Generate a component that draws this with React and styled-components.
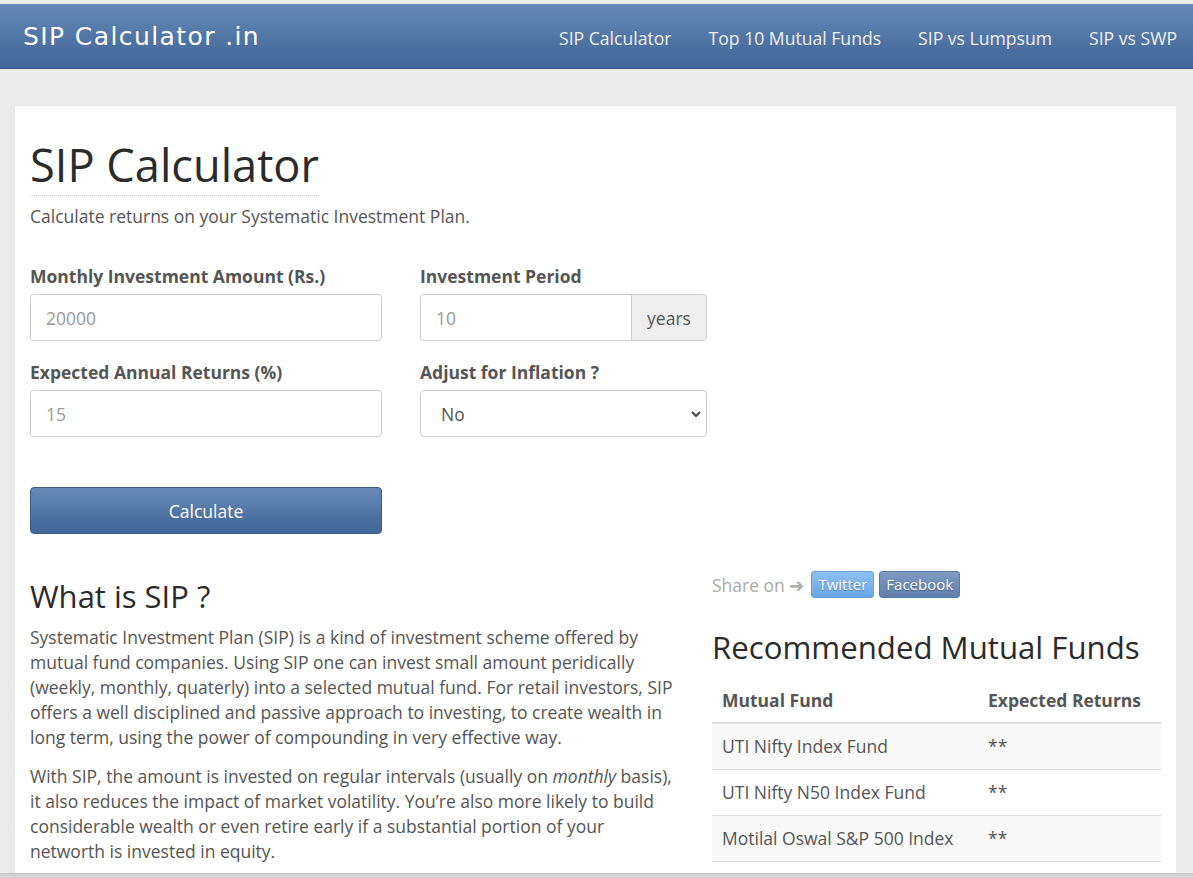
import React from "react";
import styled, { createGlobalStyle } from "styled-components";

const GlobalStyle = createGlobalStyle`
  html, body {
    margin: 0;
    padding: 0;
    background: #ebebeb;
    font-family: "Open Sans", "Noto Sans", sans-serif;
    color: #555;
  }
  * { box-sizing: border-box; }
`;

const Header = styled.header`
  border-top: 4px solid #ececec;
  height: 69px;
  background: linear-gradient(to bottom, #6688b6 0%, #5a7eae 30%, #4a6e9e 70%, #44689a 100%);
  border-bottom: 1px solid #35557f;
  display: flex;
  align-items: center;
  justify-content: space-between;
  padding: 3px 16px 0 23px;
`;

const Logo = styled.div`
  font-family: "DejaVu Sans", "Noto Sans", sans-serif;
  font-size: 25px;
  letter-spacing: 1.4px;
  color: #fff;
  margin-top: -2px;
`;

const Nav = styled.nav`
  display: flex;
  gap: 37px;
`;

const NavLink = styled.a`
  color: #f0f0f0;
  font-size: 17.6px;
  text-decoration: none;
`;

const Page = styled.div`
  padding: 37px 17px 40px 15px;
`;

const Card = styled.main`
  background: #fff;
  padding: 30px 15px 20px;
`;

const Title = styled.h1`
  display: inline-block;
  margin: 0;
  font-size: 45.2px;
  font-weight: 400;
  color: #2b2b2b;
  line-height: 58px;
  padding-bottom: 1px;
  border-bottom: 1px dotted #d6d6d6;
`;

const Lead = styled.p`
  margin: 8px 0 0;
  font-size: 17.5px;
  color: #555;
`;

const FormGrid = styled.div`
  display: grid;
  grid-template-columns: 352px 287px;
  column-gap: 38px;
  row-gap: 19px;
  margin-top: 36px;
`;

const Field = styled.div`
  display: flex;
  flex-direction: column;
`;

const Label = styled.label`
  font-size: 17.5px;
  font-weight: 700;
  color: #555;
  margin-bottom: 6px;
  line-height: 24px;
`;

const Input = styled.input`
  height: 47px;
  width: 100%;
  border: 1px solid #ccc;
  border-radius: 4px;
  padding: 0 15px;
  font-family: inherit;
  font-size: 17.5px;
  color: #555;
  &::placeholder { color: #999; }
`;

const InputGroup = styled.div`
  display: flex;
  height: 47px;
  border: 1px solid #ccc;
  border-radius: 4px;
  overflow: hidden;
`;

const GroupInput = styled.input`
  flex: 1;
  min-width: 0;
  border: none;
  padding: 0 15px;
  font-family: inherit;
  font-size: 17.5px;
  &::placeholder { color: #999; }
`;

const Addon = styled.span`
  width: 75px;
  background: #eee;
  border-left: 1px solid #ccc;
  display: flex;
  align-items: center;
  justify-content: center;
  font-size: 17.5px;
  color: #555;
`;

const SelectBox = styled.div`
  position: relative;
  height: 47px;
  border: 1px solid #ccc;
  border-radius: 4px;
  display: flex;
  align-items: center;
  padding: 0 20px;
  font-size: 17.5px;
  color: #555;
`;

const Chevron = styled.svg`
  position: absolute;
  right: 4px;
  top: 50%;
  margin-top: -5px;
`;

const Button = styled.button`
  margin-top: 50px;
  width: 352px;
  height: 47px;
  border: 1px solid #3a5b86;
  border-radius: 4px;
  background: linear-gradient(to bottom, #6688b6 0%, #5a7eae 35%, #4a6e9e 70%, #44689a 100%);
  color: #fff;
  font-family: inherit;
  font-size: 17.5px;
`;

const Lower = styled.div`
  display: grid;
  grid-template-columns: 652px 449px;
  column-gap: 30px;
  margin-top: 36px;
`;

const SectionTitle = styled.h2`
  margin: 5px 0 8px;
  font-size: 31px;
  font-weight: 400;
  color: #2b2b2b;
  line-height: 42px;
`;

const Para = styled.p`
  margin: 0 0 14px;
  font-size: 17.5px;
  line-height: 25px;
  color: #555;
`;

const Share = styled.div`
  display: flex;
  align-items: center;
  gap: 5px;
  font-size: 17.5px;
  color: #aaa;
  margin-top: 1px;
`;

const ShareLabel = styled.span`
  margin-right: 2px;
`;

const ShareBtn = styled.span`
  font-size: 15px;
  color: #fff;
  padding: 2px 6px 3px;
  border-radius: 3px;
  border: 1px solid ${p => p.$border};
  background: ${p => p.$bg};
  text-shadow: 0 1px 1px rgba(0,0,0,0.25);
`;

const RightTitle = styled.h2`
  margin: 29px 0 0;
  font-size: 31.2px;
  font-weight: 400;
  color: #2b2b2b;
  line-height: 40px;
`;

const Table = styled.table`
  margin-top: 13px;
  width: 100%;
  border-collapse: collapse;
  font-size: 17.5px;
`;

const Th = styled.th`
  text-align: left;
  font-weight: 700;
  color: #555;
  padding: 8px 10px 10px;
  border-bottom: 2px solid #ddd;
`;

const Row = styled.tr`
  background: ${p => (p.$striped ? "#f9f9f9" : "#fff")};
`;

const Td = styled.td`
  padding: 0 10px;
  height: 46px;
  color: #555;
  border-bottom: 1px solid #ddd;
`;

const BottomBar = styled.div`
  position: fixed;
  left: 0;
  right: 0;
  bottom: 0;
  height: 5px;
  background: #d4d4d4;
  border-top: 1px solid #c4c4c4;
`;

const navItems = ["SIP Calculator", "Top 10 Mutual Funds", "SIP vs Lumpsum", "SIP vs SWP"];

const funds = [
  "UTI Nifty Index Fund",
  "UTI Nifty N50 Index Fund",
  "Motilal Oswal S&P 500 Index",
];

export default function App() {
  return (
    <>
      <GlobalStyle />
      <Header>
        <Logo>SIP Calculator .in</Logo>
        <Nav>
          {navItems.map(n => (
            <NavLink key={n} href="#">{n}</NavLink>
          ))}
        </Nav>
      </Header>
      <Page>
        <Card>
          <Title>SIP Calculator</Title>
          <Lead>Calculate returns on your Systematic Investment Plan.</Lead>

          <FormGrid>
            <Field>
              <Label>Monthly Investment Amount (Rs.)</Label>
              <Input placeholder="20000" />
            </Field>
            <Field>
              <Label>Investment Period</Label>
              <InputGroup>
                <GroupInput placeholder="10" />
                <Addon>years</Addon>
              </InputGroup>
            </Field>
            <Field>
              <Label>Expected Annual Returns (%)</Label>
              <Input placeholder="15" />
            </Field>
            <Field>
              <Label>Adjust for Inflation ?</Label>
              <SelectBox>
                No
                <Chevron width="12" height="10" viewBox="0 0 12 10">
                  <path d="M2 3 L6 7 L10 3" fill="none" stroke="#444" strokeWidth="2" />
                </Chevron>
              </SelectBox>
            </Field>
          </FormGrid>

          <Button>Calculate</Button>

          <Lower>
            <div>
              <SectionTitle>What is SIP ?</SectionTitle>
              <Para>
                Systematic Investment Plan (SIP) is a kind of investment scheme offered by
                mutual fund companies. Using SIP one can invest small amount peridically
                (weekly, monthly, quaterly) into a selected mutual fund. For retail investors, SIP
                offers a well disciplined and passive approach to investing, to create wealth in
                long term, using the power of compounding in very effective way.
              </Para>
              <Para>
                With SIP, the amount is invested on regular intervals (usually on <em>monthly</em> basis),
                it also reduces the impact of market volatility. You’re also more likely to build
                considerable wealth or even retire early if a substantial portion of your
                networth is invested in equity.
              </Para>
            </div>
            <div>
              <Share>
                <ShareLabel>Share on ➔</ShareLabel>
                <ShareBtn $bg="linear-gradient(#8cc0f0, #6aa6e4)" $border="#6aa0d8">Twitter</ShareBtn>
                <ShareBtn $bg="linear-gradient(#7d9bc2, #5f80ad)" $border="#587aa6">Facebook</ShareBtn>
              </Share>
              <RightTitle>Recommended Mutual Funds</RightTitle>
              <Table>
                <thead>
                  <tr>
                    <Th>Mutual Fund</Th>
                    <Th>Expected Returns</Th>
                  </tr>
                </thead>
                <tbody>
                  {funds.map((f, i) => (
                    <Row key={f} $striped={i % 2 === 0}>
                      <Td>{f}</Td>
                      <Td>**</Td>
                    </Row>
                  ))}
                </tbody>
              </Table>
            </div>
          </Lower>
        </Card>
      </Page>
      <BottomBar />
    </>
  );
}
